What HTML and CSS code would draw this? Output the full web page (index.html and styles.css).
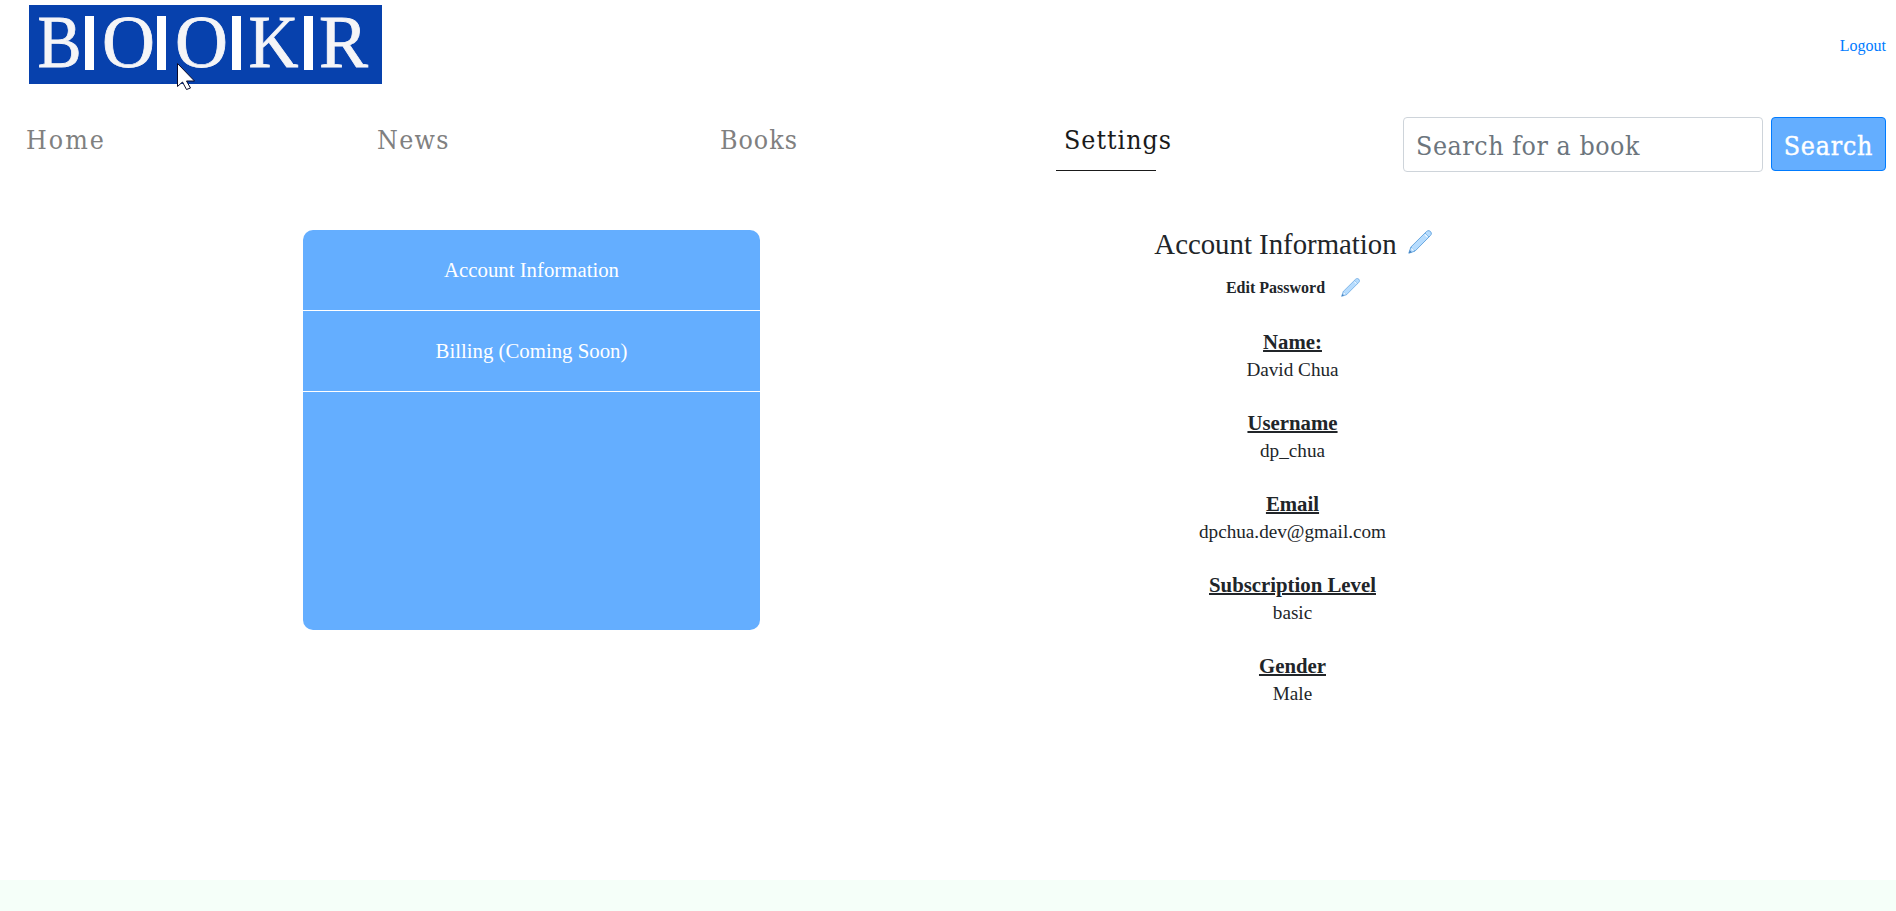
FILE: index.html
```html
<!DOCTYPE html>
<html lang="en">
<head>
<meta charset="utf-8">
<title>Bookr - Settings</title>
<link rel="stylesheet" href="styles.css">
</head>
<body>
<svg class="defs" width="0" height="0">
  <symbol id="pencil" viewBox="0 0 24 24">
    <path d="M.8 23.2 2.9 17 18.4 1.6q1.1-1.1 2.6-.9 1.9.4 2.3 2.3.2 1.5-.9 2.6L7 21.1z" fill="#b6dcfe" stroke="#6aa8e0" stroke-width="1"/>
    <path d="M17 3l4 4M2.900 17l4.100 4.100" fill="none" stroke="#6aa8e0" stroke-width=".8"/>
    <path d="M17 4.500l2.500 2.500M3.500 18.500l2 2" stroke="#e8f5ff" stroke-width="1.500"/>
    <path d="M.8 23.200l1-3 2 2z" fill="#4682be"/>
  </symbol>
</svg>
<header class="header">
  <svg class="logo" width="353" height="79" viewBox="29 5 353 79">
    <rect x="29" y="5" width="353" height="79" fill="#0741ad"/>
    <g class="logo-letters">
      <text x="37.500" y="67" textLength="44" lengthAdjust="spacingAndGlyphs">B</text>
      <text x="102" y="67" textLength="53" lengthAdjust="spacingAndGlyphs">O</text>
      <text x="175" y="67" textLength="53" lengthAdjust="spacingAndGlyphs">O</text>
      <text x="248.500" y="67" textLength="50" lengthAdjust="spacingAndGlyphs">K</text>
      <text x="319" y="67" textLength="49" lengthAdjust="spacingAndGlyphs">R</text>
    </g>
    <path d="M85 16h9v54h-9zM157 16h9v54h-9zM232 16h9v54h-9zM304 16h9v54h-9z" fill="#fff"/>
  </svg>
  <a class="logout">Logout</a>
</header>
<nav class="nav">
  <a class="nav-link home">Home</a>
  <a class="nav-link news">News</a>
  <a class="nav-link books">Books</a>
  <a class="nav-link settings">Settings</a>
  <form class="search">
    <input class="search-input" type="text" placeholder="Search for a book">
    <button class="search-button" type="button">Search</button>
  </form>
</nav>
<main class="main">
  <aside class="menu">
    <a class="menu-item">Account Information</a>
    <a class="menu-item">Billing (Coming Soon)</a>
  </aside>
  <section class="account">
    <h1 class="title">Account Information<svg class="title-icon"><use href="#pencil"/></svg></h1>
    <div class="password">Edit Password<svg class="password-icon"><use href="#pencil"/></svg></div>
    <dl class="fields">
      <div class="field"><dt>Name:</dt><dd>David Chua</dd></div>
      <div class="field"><dt>Username</dt><dd>dp_chua</dd></div>
      <div class="field"><dt>Email</dt><dd>dpchua.dev@gmail.com</dd></div>
      <div class="field"><dt>Subscription Level</dt><dd>basic</dd></div>
      <div class="field"><dt>Gender</dt><dd>Male</dd></div>
    </dl>
  </section>
</main>
<footer class="footer"></footer>
<svg class="cursor" width="20" height="28" viewBox="0 0 20 28"><path d="M.5.500v23l5-4.500 4 7.500 4-1.500-4-7h8z" fill="#fff" stroke="#0a0a28"/></svg>
</body>
</html>
```
FILE: styles.css
```css
* { box-sizing: border-box; }
body {
  margin: 0;
  height: 911px;
  display: flex;
  flex-direction: column;
  overflow: hidden;
  background: #fff;
  color: #212529;
  font-family: "Liberation Serif", serif;
}
.defs { position: absolute; }
.header {
  display: flex;
  justify-content: space-between;
  align-items: flex-start;
  height: 117px;
  padding: 5px 10px 0 29px;
}
.logo { display: block; overflow: visible; }
.logo-letters {
  font-size: 73px;
  fill: #f5f5f7;
  stroke: #f5f5f7;
  stroke-width: .8px;
}
.logout {
  margin-top: 32px;
  font-size: 16px;
  line-height: 18px;
  color: #007bff;
}
.nav {
  display: flex;
  align-items: flex-start;
  height: 113px;
  padding: 0 10px 0 18px;
  font-family: "DejaVu Serif Condensed", "DejaVu Serif", serif;
  font-stretch: condensed;
}
.nav-link {
  height: 54px;
  padding-left: 8px;
  font-size: 26.500px;
  line-height: 46px;
  letter-spacing: 1px;
  white-space: nowrap;
  color: #808080;
}
.home { width: 351px; letter-spacing: 2px; }
.news { width: 343px; letter-spacing: 1.300px; }
.books { width: 344px; }
.settings {
  width: 100px;
  margin-right: 247px;
  color: #1a1a1a;
  border-bottom: 1px solid #1a1a1a;
}
.search { display: flex; gap: 8px; }
.search-input {
  width: 360px;
  height: 55px;
  padding: 1px 12px 0;
  border: 1px solid #ced4da;
  border-radius: 4px;
  font: inherit;
  font-size: 26.500px;
  letter-spacing: .55px;
}
.search-input::placeholder { color: #6c757d; opacity: 1; }
.search-button {
  width: 115px;
  height: 54px;
  padding: 3px 0 0;
  border: 1px solid #007bff;
  border-radius: 4px;
  background: #64aeff;
  color: #fff;
  font: inherit;
  font-size: 26.500px;
  letter-spacing: .8px;
  -webkit-text-stroke: .4px #fff;
}
.main {
  display: flex;
  flex: 1;
  align-items: flex-start;
  padding-left: 303px;
}
.menu {
  width: 457px;
  height: 400px;
  border-radius: 10px;
  background: #64aeff;
}
.menu-item {
  display: block;
  height: 81px;
  border-bottom: 1px solid #fff;
  font-size: 20.800px;
  line-height: 79px;
  text-align: center;
  color: #fff;
}
.account { width: 457px; margin-left: 304px; }
.title {
  display: flex;
  justify-content: center;
  margin: 0;
  padding-left: 1px;
  font-size: 28.800px;
  font-weight: 400;
  line-height: 28px;
}
.title-icon { width: 24px; height: 24px; margin-left: 11px; }
.password {
  display: flex;
  justify-content: center;
  margin-top: 20px;
  padding-left: 1px;
  font-size: 16px;
  font-weight: 700;
  line-height: 20px;
}
.password-icon { width: 19px; height: 19px; margin-left: 16px; }
.fields { margin: 30px 0 0; text-align: center; }
.field { height: 81px; }
.field dt {
  font-size: 20.800px;
  font-weight: 700;
  line-height: 27px;
  text-decoration: underline;
  text-decoration-thickness: 2px;
}
.field dd { margin: 0; font-size: 19.200px; line-height: 30px; }
.footer { height: 31px; background: #f5fff9; }
.cursor { position: absolute; left: 177px; top: 63px; }
```
